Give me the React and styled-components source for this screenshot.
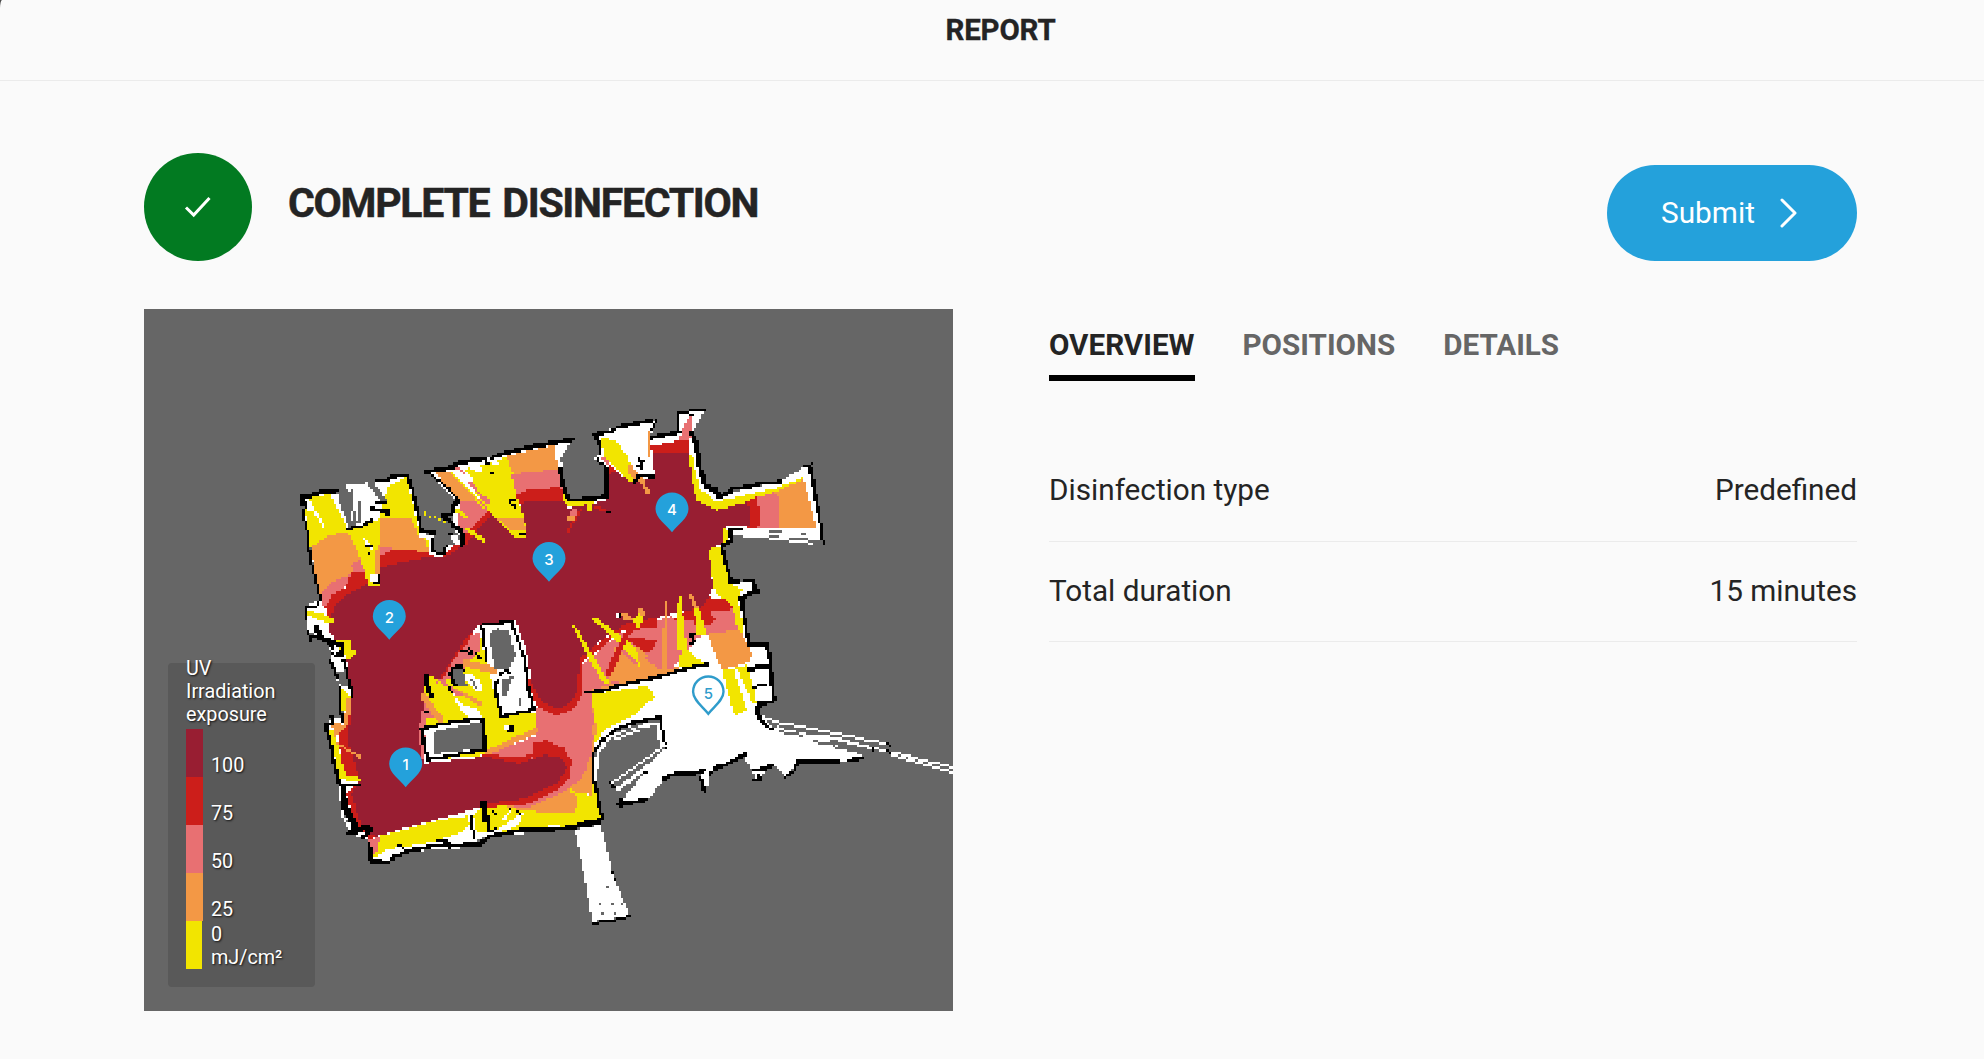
import React from "react";
import styled, { createGlobalStyle } from "styled-components";

const GlobalStyle = createGlobalStyle`
  * { box-sizing: border-box; }
  html { background: #4a4a4a; }
  body { margin: 0; font-family: Roboto, "Liberation Sans", sans-serif; color: #242424; }
`;

const Page = styled.div`
  width: 100%;
  min-height: 1059px;
  background: #fafafa;
  border-top-left-radius: 2px 9px;
  overflow: hidden;
`;

const Header = styled.header`
  height: 81px;
  display: flex;
  justify-content: center;
  border-bottom: 1px solid #ebebeb;
`;

const HeaderTitle = styled.h1`
  margin: 0;
  padding-left: 17px;
  font-size: 29.5px;
  line-height: 60px;
  font-weight: 700;
  letter-spacing: -0.2px;
  -webkit-text-stroke: 0.3px #242424;
`;

const Main = styled.main`
  padding: 72px 127px 0 144px;
`;

const TitleRow = styled.div`
  display: flex;
  align-items: flex-end;
  height: 108px;
  margin-bottom: 48px;
`;

const StatusBadge = styled.div`
  width: 108px;
  height: 108px;
  border-radius: 50%;
  background: #027a21;
  display: flex;
  align-items: center;
  justify-content: center;
`;

const Title = styled.h2`
  margin: 0 auto 0 36px;
  font-size: 41px;
  line-height: 48px;
  font-weight: 700;
  letter-spacing: -1.27px;
  word-spacing: 4px;
  -webkit-text-stroke: 0.5px #242424;
  padding-bottom: 34px;
  white-space: nowrap;
`;

const SubmitButton = styled.button`
  width: 250px;
  height: 96px;
  padding: 0 60px 0 54px;
  border: 0;
  border-radius: 48px;
  background: #24a1db;
  color: #fff;
  font: 400 29.8px/36px Roboto, sans-serif;
  display: flex;
  align-items: center;
  justify-content: space-between;
`;

const Columns = styled.div`
  display: grid;
  grid-template-columns: 809px 1fr;
  column-gap: 96px;
`;

const MapPanel = styled.section`
  position: relative;
  height: 702px;
  background: #666;
  svg { display: block; }
`;

const Legend = styled.div`
  position: absolute;
  left: 24px;
  top: 354px;
  width: 147px;
  height: 324px;
  padding-left: 18px;
  border-radius: 4px;
  background: #595959;
  color: #fff;
  font-size: 19.8px;
  line-height: 23px;
  text-shadow: 1px 1px 2px rgba(0, 0, 0, 0.8);
`;

const LegendTitle = styled.div`
  width: 100px;
  margin-top: -6px;
  height: 72px;
`;

const LegendStep = styled.div`
  display: flex;
  align-items: flex-end;
  height: 48px;
`;

const Swatch = styled.div`
  width: ${(p) => (p.$last ? 16 : 17)}px;
  height: 48px;
  margin-right: ${(p) => (p.$last ? 9 : 8)}px;
  background: ${(p) => p.$color};
`;

const StepLabel = styled.div`
  width: 62px;
`;

const Tabs = styled.nav`
  display: flex;
  gap: 48px;
  padding-top: 18px;
`;

const Tab = styled.button`
  padding: 0;
  height: 54px;
  border: 0;
  border-bottom: 6px solid ${(p) => (p.$active ? "#000" : "transparent")};
  background: none;
  color: ${(p) => (p.$active ? "#242424" : "#666")};
  font: 700 29.65px/36px Roboto, sans-serif;
  display: flex;
  align-items: flex-start;
`;

const Facts = styled.dl`
  margin: 60px 0 0;
`;

const Fact = styled.div`
  display: flex;
  justify-content: space-between;
  align-items: center;
  height: ${(p) => p.$height}px;
  padding-bottom: 2px;
  border-bottom: 1px solid #ebebeb;
  font-size: 29.7px;
  line-height: 36px;
  dt, dd { margin: 0; }
`;

/* ---- exposure map: shapes are painted into an occupancy grid of square cells ---- */

const CELL = 7.3;
const LEFT = -408;
const TOP = -393;
const COLS = Math.ceil(2427 / CELL);
const ROWS = Math.ceil(2106 / CELL);

const W = "#ffffff";
const K = "#000000";
const G = "#666666";
const Y = "#f2e500";
const O = "#f39845";
const P = "#e87072";
const R = "#cc1e1a";
const C = "#981e32";

// origins of the survey tiles
const NW = [0, 0];
const N = [660, -150];
const NE = [1110, -150];
const SW = [0, 540];
const SE = [840, 420];

// [kind, colour, tile, points, line width in cells]
const shapes = [
  // free floor
  ["f", W, NW, "65,170 120,155 170,150 178,190 210,268 240,245 275,240 215,240 200,136 290,125 320,115 380,105 390,130 410,200 425,280 460,285 455,335 490,345 505,315 550,315 545,290 525,270 515,235 530,185 440,95 520,80 610,55 720,25 750,25 880,-2 845,45 840,80 865,180 980,170 980,85 945,55 960,40 958,0 940,-20 1000,-35 1100,-58 1130,-62 1110,-10 1200,-25 1195,-80 1272,-90 1240,-20 1260,80 1280,140 1320,175 1380,150 1500,125 1580,75 1605,190 1630,310 1470,295 1360,285 1350,305 1328,320 1355,425 1415,420 1430,450 1385,470 1410,615 1460,615 1468,670 1475,680 1482,780 1430,790 1440,830 1480,870 1600,880 1750,950 1710,965 1555,965 1520,1010 1475,970 1430,1020 1390,945 1290,1000 1278,1055 1260,995 1160,1010 1105,1075 1020,1090 1150,925 1140,830 1030,855 960,900 940,940 940,1020 968,1135 840,1170 620,1190 540,1225 370,1235 320,1265 270,1260 265,1200 210,1180 180,1050 140,860 160,830 190,840 180,740 150,665 165,615 80,570 75,500 120,480"],
  // low exposure
  ["f", P, NW, "540,190 600,180 640,230 620,300 555,310 550,280 530,250"],
  ["f", Y, NW, "95,170 150,163 175,210 205,275 300,235 325,140 380,110 400,200 420,290 445,300 450,345 300,440 270,440 120,330 88,320 75,210"],
  ["f", Y, NW, "545,90 620,72 690,45 720,200 740,290 705,295 620,210"],
  ["f", Y, N, "305,145 345,150 380,195 400,240 420,265 395,280 310,195"],
  ["f", Y, N, "570,195 590,290 650,338 740,320 740,345 650,360 585,330 565,220"],
  ["f", Y, N, "178,240 200,335 280,330 282,355 230,350 190,350"],
  ["f", Y, NE, "110,195 128,200 148,295 200,335 380,293 460,262 465,290 320,325 200,360 135,330 118,240"],
  ["f", Y, NE, "175,475 215,470 245,585 275,600 265,640 282,720 250,690 190,590"],
  ["f", Y, SE, "465,0 520,15 545,120 550,180 500,90"],
  ["f", Y, SE, "85,345 260,318 285,350 215,410 140,445 105,490"],
  ["f", Y, SE, "485,272 565,255 590,370 570,370 525,280 560,390 525,408"],
  ["f", Y, SW, "435,170 510,140 600,40 615,110 660,290 765,275 765,340 620,405 440,420 415,330"],
  ["f", Y, SW, "275,715 290,650 370,630 480,600 560,588 580,650 470,665 370,680 320,690"],
  ["f", Y, SW, "580,590 610,550 880,580 895,550 870,510 940,540 935,480 950,600 640,638 590,640"],
  ["f", Y, SE, "0,700 55,680 30,630 90,645 100,600 125,712 0,745"],
  ["f", Y, SW, "148,330 162,325 172,370 184,420 200,475 180,480"],
  ["f", Y, SW, "180,200 215,230 215,250 190,280 180,260"],
  // orange
  ["f", O, NW, "92,322 150,285 205,275 235,340 250,400 150,440 120,470"],
  ["f", O, NW, "300,235 392,232 415,290 440,300 445,350 285,400 285,335"],
  ["f", O, NW, "465,95 510,92 625,205 600,225 530,180"],
  ["f", O, N, "20,198 170,163 175,240 40,255"],
  ["f", O, NE, "375,305 463,268 497,411 385,411"],
  ["f", O, SE, "80,340 180,200 300,230 360,265 300,285"],
  ["f", O, SE, "440,160 540,150 585,240 485,270"],
  ["f", O, SE, "75,340 92,345 108,440 100,560 92,645 30,630 40,560"],
  ["f", O, SW, "640,552 740,560 840,510 890,480 895,550 880,580 740,573"],
  ["f", O, SE, "0,640 50,650 55,680 30,700 0,690"],
  ["f", O, SW, "155,308 190,312 200,235 215,235 210,330 165,350"],
  // pink
  ["f", P, NW, "118,470 150,430 220,398 215,372 240,360 262,408 190,440 145,510 130,500"],
  ["f", P, NW, "300,325 325,320 345,335 305,360"],
  ["f", P, NW, "545,185 595,180 640,215 580,262 535,245"],
  ["f", P, N, "35,253 175,237 185,295 50,318"],
  ["f", P, N, "298,200 325,208 330,235"],
  ["f", P, N, "545,120 565,80 578,75 570,150 540,148"],
  ["f", P, NE, "315,325 372,305 385,320 385,411 320,411"],
  ["f", P, SE, "-10,420 50,380 70,250 180,160 330,110 440,130 450,90 520,85 532,150 440,162 380,190 330,130 300,270 80,335 85,400 100,470 95,520 60,600 0,640 -60,640"],
  ["f", P, SW, "765,270 900,200 930,140 940,300 935,370 920,450 860,510 740,565 640,552 620,400 765,350"],
  ["f", P, SW, "430,440 415,330 435,230 480,295 440,290"],
  ["f", P, SW, "470,190 510,130 550,60 600,35 600,90 530,170"],
  ["f", P, SW, "265,660 300,650 290,690 278,710"],
  // red
  ["f", R, NW, "135,500 160,460 200,440 215,395 262,400 275,450 150,545"],
  ["f", R, NW, "303,345 345,328 440,336 460,350 340,390 303,390"],
  ["f", R, NW, "575,262 630,205 680,250 560,320 490,350"],
  ["f", R, N, "48,316 90,297 183,292 192,335 60,345"],
  ["f", R, N, "325,220 350,240 325,270"],
  ["f", R, N, "452,168 565,148 568,195 458,200"],
  ["f", R, NE, "285,335 318,322 332,370 325,411 290,411"],
  ["f", R, SE, "0,400 50,350 60,230 130,180 200,120 290,110 290,140 180,155 110,215 70,240 65,330 30,385"],
  ["f", R, SE, "330,125 440,50 500,60 520,88 450,95 470,120 440,140"],
  ["f", R, SE, "190,170 300,180 310,210 255,215 200,180"],
  ["f", R, SW, "470,180 540,60 580,30 560,70 520,120 490,180"],
  ["f", R, SW, "215,240 205,310 172,345 178,380 184,420 198,465 240,480 200,520 220,610 270,660 300,640 260,400"],
  ["l", R, SW, "755,190 785,250 830,273 870,255 892,215 895,130", 3.2],
  ["l", R, SW, "620,415 710,425 765,390 800,380 840,395 862,430 855,465 820,500 740,540 620,550", 3.2],
  ["f", R, SW, "760,365 800,362 840,380 870,415 860,450 760,430"],
  // full exposure
  ["f", C, NW, "150,540 165,500 200,465 260,435 300,430 303,382 340,372 440,352 500,348 560,312 600,262 635,220 690,275 740,290 722,200 735,182 850,180 865,205 980,180 985,110 1000,90 1060,130 1125,115 1115,40 1225,35 1235,120 1250,180 1310,210 1405,185 1410,260 1340,260 1335,305 1285,330 1300,440 1270,500 1140,530 1040,550 970,595 900,655 890,755 870,790 830,808 785,785 755,730 740,630 705,540 600,555 560,590 530,640 480,715 435,710 430,800 415,880 430,970 620,950 720,970 790,945 840,950 862,985 830,1030 740,1075 640,1087 540,1120 370,1165 285,1190 240,1150 215,1060 240,1020 205,910 215,770 200,650 150,575"],
  // shadows cast into the exposed area
  ["f", Y, NW, "208,282 298,240 300,305 280,345 288,400 300,438 268,442 240,350"],
  ["f", O, NW, "300,305 300,400 285,400 282,340"],
  ["f", W, NW, "250,290 272,310 278,330 256,312"],
  ["f", K, NW, "290,405 303,405 303,430 275,430 290,422"],
  ["f", W, NW, "272,403 292,403 292,424 272,424"],
  ["l", K, NW, "258,322 275,320", 1], ["l", K, NW, "268,338 270,340", 1],
  ["f", Y, NW, "620,210 690,110 720,200 742,270 738,296 705,296"],
  ["f", O, NW, "648,235 728,235 740,272 700,275"],
  ["l", K, NW, "722,282 735,282", 1.3],
  ["l", K, NW, "688,182 690,190 705,198", 1.6], ["l", K, NW, "700,178 703,180", 1],
  ["f", Y, NW, "550,260 580,272 618,300 612,308 570,282"],
  ["l", Y, NW, "437,220 437,222", 1], ["l", Y, NW, "452,228 452,229", 1], ["l", Y, NW, "467,233 467,234", 1], ["l", Y, NW, "482,240 482,241", 1], ["l", Y, NW, "497,246 497,247", 1], ["l", Y, NW, "512,252 512,254", 1], ["l", Y, NW, "527,259 527,260", 1],
  ["l", Y, NW, "510,95 612,200", 1], ["l", P, NW, "535,85 620,185", 1.4], ["l", Y, NW, "525,210 560,230", 1.6], ["l", W, NW, "500,95 530,90 570,120", 1.2], ["l", W, NW, "540,80 575,120", 1.4],
  ["l", W, NW, "85,180 105,215 130,260", 1.1], ["l", W, NW, "75,185 92,205", 2],
  ["l", G, NW, "215,150 222,235", 1], ["l", G, NW, "235,190 240,235", 1], ["l", G, NW, "275,135 312,185", 2.2], ["l", G, NW, "205,150 212,220", 1],
  ["f", P, N, "215,355 232,360 225,390 208,388"], ["f", O, N, "205,380 232,375 225,392 205,395"], ["l", R, N, "240,360 205,425", 1], ["l", R, N, "285,350 315,362", 1.2], ["l", Y, N, "265,335 270,355", 2], ["l", K, N, "320,365 330,365", 1],
  ["l", O, N, "425,268 442,305", 1.5], ["l", O, N, "390,235 410,265", 2.4], ["l", O, N, "445,125 448,195", 1.4],
  ["l", Y, NE, "225,420 228,455", 1.4],
  ["f", Y, SE, "95,115 110,115 230,205 240,260 210,225"],
  ["f", O, SE, "165,200 235,260 300,285 140,310"],
  ["f", O, SE, "225,195 320,270 250,290"],
  ["f", P, SE, "255,235 330,130 350,150 330,265 300,270"],
  ["f", Y, SE, "36,138 48,142 150,312 125,305 95,250"],
  ["f", Y, SE, "318,100 325,180 308,185"], ["f", O, SE, "316,62 324,65 325,270 303,270 308,180"],
  ["f", O, SE, "385,42 400,48 420,100 402,90"], ["f", Y, SE, "402,78 420,95 442,168 412,168"],
  ["f", Y, SE, "240,90 257,92 240,148 215,130"], ["f", O, SE, "180,98 200,102 225,125 195,125"], ["l", O, SE, "240,92 250,100", 2], ["l", R, SE, "215,140 180,200 145,280", 2.2],
  ["l", K, SE, "180,102 180,112", 1.2], ["l", W, SE, "172,102 172,112", 1],
  ["f", P, SE, "330,125 400,125 412,165 390,200 340,265 320,265"],
  ["f", W, SE, "408,178 440,168 480,270 450,260 445,245 380,215 370,207 398,205"],
  ["f", Y, SE, "355,50 362,50 380,205 350,210"], ["f", Y, SE, "367,195 430,250 355,264"],
  ["l", K, SE, "408,162 395,165 402,185 392,192", 1.8],
  ["l", W, SE, "530,275 575,375", 1.2], ["f", W, SE, "565,250 580,215 620,250 635,360 590,365"],
  // south-west details
  ["l", O, SW, "560,130 645,152", 2.4], ["l", O, SW, "515,205 600,250", 1.4], ["l", P, SW, "480,180 540,225", 1.4], ["l", O, SW, "430,225 485,305", 2.2],
  ["f", W, SW, "515,210 540,250 600,270 605,295 570,300 530,250"], ["l", W, SW, "570,170 595,205", 3], ["l", G, SW, "575,180 590,205", 1],
  ["l", O, SW, "620,398 765,332", 2], ["f", P, SW, "640,402 762,348 762,400 720,412"],
  ["l", K, SW, "548,92 575,98 570,88", 1.3], ["l", K, SW, "590,98 600,118", 1.3], ["l", K, SW, "505,205 515,215", 1.3], ["l", K, SW, "437,275 440,277", 1],
  ["f", G, SW, "515,145 548,145 562,200 525,198"], ["l", K, SW, "552,150 540,140 515,145 512,165 525,195", 2],
  ["l", K, SW, "438,170 442,200 455,230", 2.4],
  ["f", W, SW, "432,325 605,295 615,388 445,420"], ["f", G, SW, "458,335 608,303 612,385 460,402"],
  ["l", K, SW, "425,325 520,305 605,295 612,320 615,388 500,410 445,418 432,370 428,330", 1.8],
  ["f", W, SW, "605,15 700,8 720,100 760,268 668,288 645,190 662,160 622,110"], ["f", G, SW, "625,40 655,25 688,35 708,108 690,145 645,145"], ["f", G, SW, "668,180 700,168 690,195 675,230 665,225"], ["l", G, SW, "717,238 717,255", 1],
  ["l", K, SW, "606,20 612,70 620,120", 1.5], ["l", K, SW, "610,15 695,5 710,50 735,120 745,205 762,268 665,290 652,240 645,190 655,180", 1.8], ["l", K, SW, "660,165 682,150 690,160", 1.7],
  ["f", K, SW, "690,318 700,318 698,338 680,340 680,330 690,330"], ["f", W, SW, "672,318 690,318 690,328 675,328"],
  ["f", W, SW, "490,655 545,635 570,610 590,668 530,680"], ["l", K, SW, "572,588 575,620 582,652", 1.4], ["l", K, SW, "610,548 618,598", 3.4], ["l", K, SW, "620,600 628,635 650,628", 1.2], ["l", K, SW, "640,577 645,580", 1.2], ["l", K, SW, "687,570 690,573", 1], ["l", K, SW, "715,577 720,579", 1],
  ["l", W, SW, "690,575 672,595", 1.2], ["f", W, SW, "710,590 728,580 718,612 690,630 640,635"], ["f", W, SW, "285,705 365,678 368,690 320,705"],
  ["l", Y, SW, "872,512 900,535", 1.2],
  ["l", Y, NW, "80,518 155,542", 2.2], ["f", Y, SW, "150,58 210,60 215,85 230,90 222,108 200,122 190,95"],
  ["l", O, SW, "170,372 235,410", 1.1], ["l", Y, SW, "180,472 235,478", 1.5],
  ["f", G, SW, "165,155 195,150 212,205 180,195"],
  // walls
  ["l", K, NW, "68,190 62,168 90,168 125,155 170,152", 2.4], ["l", K, NW, "75,190 72,230 85,290 90,350 108,420 122,480 105,500 75,505 75,535", 1.4],
  ["l", K, NW, "290,124 325,120 330,112 380,105 390,132", 1.8], ["l", K, NW, "395,145 410,205 425,275 460,278", 1.9],
  ["l", K, NW, "278,208 320,212 322,225", 2.4], ["l", K, NW, "292,188 320,190", 1.5], ["l", K, NW, "205,268 250,256 275,242", 1.7],
  ["l", K, NW, "455,295 460,335 490,340 498,318", 1.4], ["l", K, NW, "510,282 525,300 545,318 550,300 540,270 515,250 490,228 515,222 520,200 532,185", 2.4], ["l", W, NW, "518,290 535,310", 2],
  ["l", K, NW, "532,180 500,140 460,110 435,95", 1.3], ["l", K, NW, "435,95 520,82 530,70 615,55 620,70 640,50 720,28 780,15 880,-2", 2.4], ["l", K, NW, "635,97 640,98", 1.2],
  ["l", W, NW, "570,75 600,90", 2.2], ["l", W, NW, "625,60 650,70", 1.5],
  ["l", K, N, "178,225 185,270 205,330 240,330 320,320 320,235", 2.4], ["l", W, N, "172,170 178,225", 1.8],
  ["l", K, N, "320,235 290,205", 1], ["l", K, N, "300,190 298,155 280,132 330,125 350,112 450,92", 2], ["l", K, N, "470,88 455,120", 1.1],
  ["l", K, N, "415,210 428,215 422,232 410,228", 1.7], ["l", K, N, "405,275 420,255 462,262", 2],
  ["l", K, N, "455,142 540,125", 2.4], ["l", K, N, "537,120 537,70 560,68 575,75", 1.4], ["l", K, N, "570,60 612,60", 2.2],
  ["l", K, N, "575,130 590,165 600,235 615,285 645,300 660,322 690,305", 2.7], ["l", G, N, "668,310 680,298", 1],
  ["l", K, NE, "245,295 300,290 320,282 390,276", 2], ["l", K, NE, "465,228 487,224", 1], ["l", K, NE, "480,238 490,300 503,370", 3], ["l", K, NE, "503,370 512,400 520,462", 1.6], ["l", W, NE, "470,240 485,320 500,400", 1.4],
  ["f", W, NE, "245,413 505,413 515,460 480,462 360,447 250,437"], ["l", G, NE, "362,424 390,424", 1], ["l", G, NE, "362,438 385,438", 1], ["l", G, NE, "422,447 472,446", 1], ["l", G, NE, "480,455 512,454", 1], ["l", G, NE, "460,430 463,432", 1],
  ["l", K, NE, "240,418 245,450 215,468", 2.4], ["l", K, NE, "250,414 272,416", 1.4], ["l", K, NE, "215,470 230,530 245,575 258,577", 2],
  ["l", K, NE, "282,570 308,570 312,595 320,604 300,612 272,625", 2.1],
  ["l", K, SE, "510,5 535,5", 2], ["l", K, SE, "580,0 588,35 545,50 550,100 568,195 620,195 628,225 632,258", 2], ["l", K, SE, "570,268 592,262 632,262 642,358", 2.2], ["l", K, SE, "582,320 615,316", 1.2], ["l", K, SE, "635,368 598,370 588,378 592,405 610,432 638,448", 1.7], ["l", K, SE, "600,380 605,382", 1.8],
  ["l", K, SE, "82,337 130,332 160,320 300,290 360,270 442,252", 1.9],
  // corner room behind the curved wall
  ["f", G, SE, "108,520 150,475 285,435 312,505 200,640 130,690 105,600"],
  ["l", W, SE, "106,600 112,520 145,475 200,445 295,430 305,500", 1.4], ["l", G, SE, "165,455 240,435", 1], ["l", W, SE, "165,478 235,450", 1],
  ["l", K, SE, "98,600 100,520 125,485 170,445 220,428 300,412", 1.8], ["l", K, SE, "300,412 310,470 320,505", 1.4], ["l", K, SE, "100,600 112,640 120,690 128,718 60,732 0,748", 1.8],
  ["f", W, SE, "310,510 335,520 320,590 270,650 190,662 265,580"],
  ["l", W, SE, "315,495 155,608", 1], ["l", W, SE, "312,522 175,625", 1.4],
  ["l", K, SE, "150,610 165,625", 1.2], ["l", K, SE, "255,575 262,577", 1.6], ["l", K, SE, "175,670 215,668 262,658", 1.8], ["l", K, SE, "182,660 182,675", 2],
  ["l", K, SE, "315,595 330,585 415,578 430,570", 2.3], ["l", K, SE, "422,590 435,638", 1.8], ["l", K, SE, "450,582 475,560 500,552 555,524", 2],
  ["l", K, SE, "582,570 615,568 635,555", 2.3], ["l", K, SE, "582,600 600,600 597,590", 2], ["l", K, SE, "678,590 700,575 715,545 835,544", 1.8], ["l", K, SE, "870,542 910,532", 2],
  ["f", W, SE, "600,405 640,440 700,450 780,470 900,525 850,540 650,540"], ["l", W, SE, "600,410 660,428 985,492", 1], ["l", W, SE, "650,440 880,490 1180,562", 1], ["l", W, SE, "780,465 860,482 940,508", 1], ["l", W, SE, "1000,525 1100,555 1180,578", 1],
  ["l", G, SE, "670,442 760,462", 1], ["l", G, SE, "660,456 725,466", 1], ["l", G, SE, "760,485 840,495", 1], ["l", G, SE, "820,500 890,515", 1],
  ["l", K, SE, "985,492 990,494", 1], ["l", K, SE, "935,508 938,510", 1], ["l", K, SE, "983,514 986,516", 1],
  ["l", K, SE, "592,385 595,408 612,432 638,448", 1.9],
  // south corridor
  ["f", W, SE, "45,748 122,735 165,900 203,990 200,1010 97,1025 75,900"], ["l", K, SE, "97,1029 155,1022 205,1008", 1.2],
  ["l", G, SE, "120,970 120,970", 1], ["l", G, SE, "157,970 157,970", 1], ["l", G, SE, "186,970 186,970", 1], ["l", G, SE, "128,1000 128,1000", 1], ["l", G, SE, "165,998 165,998", 1], ["l", G, SE, "142,918 142,918", 1], ["l", K, SE, "157,875 157,875", 1], ["l", K, SE, "166,898 166,898", 1],
  // south and west walls
  ["l", K, SW, "268,668 272,722 325,728 340,710 375,695 470,675 500,678 600,672 625,650 720,630 820,628 880,622 960,608", 2.1],
  ["l", K, SW, "355,675 375,690", 1.5], ["l", K, SW, "470,662 500,665 510,685", 2], ["l", W, SW, "318,718 322,720", 1],
  ["l", W, SW, "178,510 190,590 205,615", 1], ["l", K, SW, "190,500 195,560 215,600 228,625", 3.4], ["l", K, SW, "180,495 235,492", 2], ["l", K, SW, "205,640 230,635 262,618 268,632 245,655", 2.6], ["l", W, SW, "235,640 250,642", 1.1],
  ["l", K, SW, "178,490 165,440 152,370 140,330 138,315 158,312 155,292", 1.9], ["l", K, SW, "188,305 180,260 178,200", 1.6], ["l", K, SW, "218,232 200,150 190,120", 1.7], ["l", K, SW, "150,122 165,150 172,170", 1.9],
  ["l", W, SW, "165,120 185,130 180,150", 1.8], ["l", K, SW, "150,62 170,70 188,80 185,102 165,105", 2.4], ["l", K, SW, "82,35 95,60", 1.4], ["l", K, SW, "110,25 120,50 150,70 160,95", 2.6], ["l", K, SW, "90,50 130,52", 1.2], ["l", W, SW, "150,85 168,98", 1],
  ["l", K, SW, "920,215 958,215", 1.8],
];

const parse = (text, [dx, dy]) =>
  text.split(" ").map((pair) => {
    const [x, y] = pair.split(",").map(Number);
    return [(x + dx - LEFT) / CELL, (y + dy - TOP) / CELL];
  });

function fillShape(grid, points, color) {
  for (let row = 0; row < ROWS; row += 1) {
    const y = row + 0.5;
    const hits = [];
    points.forEach(([x1, y1], i) => {
      const [x2, y2] = points[(i + 1) % points.length];
      if (y1 <= y !== y2 <= y) hits.push(x1 + ((y - y1) / (y2 - y1)) * (x2 - x1));
    });
    hits.sort((a, b) => a - b);
    for (let i = 0; i + 1 < hits.length; i += 2) {
      const end = Math.min(COLS, Math.round(hits[i + 1]));
      for (let col = Math.max(0, Math.round(hits[i])); col < end; col += 1) grid[row][col] = color;
    }
  }
}

function strokeShape(grid, points, color, width) {
  const reach = width / 2;
  for (let i = 0; i + 1 < points.length; i += 1) {
    const [x1, y1] = points[i];
    const [x2, y2] = points[i + 1];
    // one step per cell along the longer axis keeps thin walls one cell wide
    const steps = Math.max(1, Math.ceil(Math.max(Math.abs(x2 - x1), Math.abs(y2 - y1))));
    for (let s = 0; s <= steps; s += 1) {
      const x = x1 + ((x2 - x1) * s) / steps;
      const y = y1 + ((y2 - y1) * s) / steps;
      for (let row = Math.round(y - reach); row < Math.round(y + reach); row += 1) {
        for (let col = Math.round(x - reach); col < Math.round(x + reach); col += 1) {
          if (grid[row] && col >= 0 && col < COLS) grid[row][col] = color;
        }
      }
    }
  }
}

function buildLayers() {
  const grid = Array.from({ length: ROWS }, () => new Array(COLS).fill(G));
  shapes.forEach(([kind, color, tile, text, width]) => {
    const points = parse(text, tile);
    if (kind === "f") fillShape(grid, points, color);
    else strokeShape(grid, points, color, color === K ? Math.max(1, width * 0.7) : width);
  });
  const paths = {};
  grid.forEach((cells, row) => {
    let start = 0;
    for (let col = 1; col <= COLS; col += 1) {
      if (cells[col] !== cells[start]) {
        const color = cells[start];
        if (color !== G) paths[color] = `${paths[color] || ""}M${start} ${row}h${col - start}v1h${start - col}z`;
        start = col;
      }
    }
  });
  return Object.entries(paths);
}

const layers = buildLayers();

const pins = [
  { n: 1, x: 405.7, y: 764 },
  { n: 2, x: 389.3, y: 616.5 },
  { n: 3, x: 549, y: 558.5 },
  { n: 4, x: 672, y: 509 },
  { n: 5, x: 708.3, y: 692.5, open: true },
];

const PinLabel = styled.text`
  font: 500 15px Inter, sans-serif;
  text-anchor: middle;
  fill: ${(p) => (p.$open ? "#2f9ccb" : "#fff")};
`;

function Pin({ n, x, y, open }) {
  return (
    <g transform={`translate(${x} ${y})`}>
      <path
        d={open ? "M0 21.3C-5 14.5-15.2 8-15.2-.8a15.2 15.2 0 0 1 30.4 0C15.2 8 5 14.5 0 21.3Z" : "M0 23.2C-5.5 16-16.5 9-16.5 0a16.5 16.5 0 0 1 33 0C16.5 9 5.5 16 0 23.2Z"}
        fill={open ? "#fff" : "#24a1db"}
        stroke={open ? "#2f9ccb" : "none"}
        strokeWidth="2.4"
      />
      <PinLabel $open={open} y="6">{n}</PinLabel>
    </g>
  );
}

function ExposureMap() {
  return (
    <svg width="809" height="702" viewBox="144 309 809 702">
      <g transform={`translate(144 309) scale(${CELL / 3})`} shapeRendering="crispEdges">
        {layers.map(([color, d]) => (
          <path key={color} d={d} fill={color} />
        ))}
      </g>
      {pins.map((pin) => (
        <Pin key={pin.n} {...pin} />
      ))}
    </svg>
  );
}

const steps = [
  { color: C, label: "100" },
  { color: R, label: "75" },
  { color: P, label: "50" },
  { color: O, label: "25" },
  { color: Y, label: "0 mJ/cm²", last: true },
];

export default function App() {
  return (
    <>
      <GlobalStyle />
      <Page>
        <Header>
          <HeaderTitle>REPORT</HeaderTitle>
        </Header>
        <Main>
          <TitleRow>
            <StatusBadge>
              <svg width="28" height="22" viewBox="0 0 28 22" fill="none" stroke="#fff" strokeWidth="3">
                <path d="M2 11.5 9.7 19 25.5 2" />
              </svg>
            </StatusBadge>
            <Title>COMPLETE DISINFECTION</Title>
            <SubmitButton>
              Submit
              <svg width="18" height="30" viewBox="0 0 18 30" fill="none" stroke="#fff" strokeWidth="3" strokeLinecap="round" strokeLinejoin="round">
                <path d="M3 2 16 15 3 28" />
              </svg>
            </SubmitButton>
          </TitleRow>
          <Columns>
            <MapPanel>
              <ExposureMap />
              <Legend>
                <LegendTitle>UV Irradiation exposure</LegendTitle>
                {steps.map(({ color, label, last }) => (
                  <LegendStep key={color}>
                    <Swatch $color={color} $last={last} />
                    <StepLabel>{label}</StepLabel>
                  </LegendStep>
                ))}
              </Legend>
            </MapPanel>
            <section>
              <Tabs>
                <Tab $active>OVERVIEW</Tab>
                <Tab>POSITIONS</Tab>
                <Tab>DETAILS</Tab>
              </Tabs>
              <Facts>
                <Fact $height={101}>
                  <dt>Disinfection type</dt>
                  <dd>Predefined</dd>
                </Fact>
                <Fact $height={100}>
                  <dt>Total duration</dt>
                  <dd>15 minutes</dd>
                </Fact>
              </Facts>
            </section>
          </Columns>
        </Main>
      </Page>
    </>
  );
}
